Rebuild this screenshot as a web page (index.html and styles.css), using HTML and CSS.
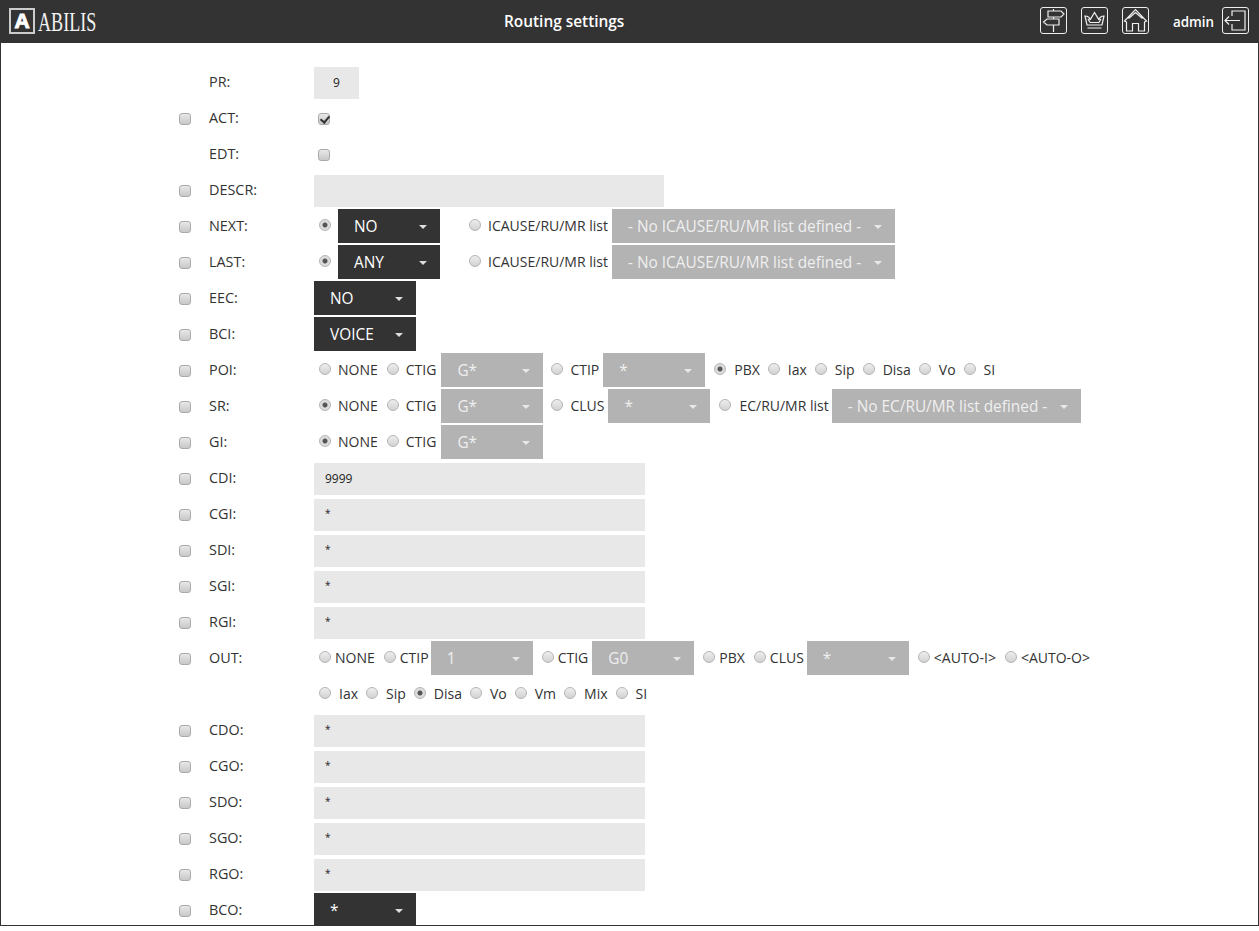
FILE: index.html
```html
<!DOCTYPE html>
<html lang="en">
<head>
<meta charset="utf-8">
<title>Routing settings</title>
<link rel="stylesheet" href="styles.css">
</head>
<body>
<div class="app">
  <header class="top">
    <div class="brand">
      <span class="logo-box">A</span>
      <span class="logo-word"><span>ABILIS</span></span>
    </div>
    <div class="title">Routing settings</div>
    <nav class="nav">
      <span class="ico"><svg viewBox="0 0 27 27"><path d="M13.5 2V4M13.5 10V12M13.5 18V25M8 4H21L24 7L21 10H8ZM7 12H19V18H7L3.5 15Z"/></svg></span>
      <span class="ico"><svg viewBox="0 0 27 27"><path d="M4 9C7 9 9 11 9 13C10 11 11.500 9 13.500 5.500C15.500 9 17 11 18 13C18 11 20 9 23 9L21 18H6ZM9 15.500H18M6.500 21H20.500M7 12L9 15.500M20 12L18 15.500"/></svg></span>
      <span class="ico"><svg viewBox="0 0 27 27"><path d="M2.500 14L13.500 2.500L24.500 14L22.500 15V24H16.500V16.500H10.500V24H4.500V15ZM6.500 11.500L13.500 5.500L20.500 11.500"/></svg></span>
      <span class="user">admin</span>
      <span class="ico"><svg viewBox="0 0 27 27"><path d="M10 9V4H23V23H10V17M3 13.500H18M7 9.500L3 13.500L7 17.500"/></svg></span>
    </nav>
  </header>
  <main class="form">
    <div class="row"><span class="tick"></span><label class="lbl">PR:</label><div class="field"><input class="txt w-pr" value="9"></div></div>
    <div class="row"><span class="tick"><input type="checkbox" class="cb"></span><label class="lbl">ACT:</label><div class="field"><input type="checkbox" class="cb" checked></div></div>
    <div class="row"><span class="tick"></span><label class="lbl">EDT:</label><div class="field"><input type="checkbox" class="cb"></div></div>
    <div class="row"><span class="tick"><input type="checkbox" class="cb"></span><label class="lbl">DESCR:</label><div class="field"><input class="txt w-desc"></div></div>

    <div class="row"><span class="tick"><input type="checkbox" class="cb"></span><label class="lbl">NEXT:</label><div class="field">
      <label class="opt solo"><input type="radio" name="next" class="rd" checked></label><div class="sel"><span>NO</span><i></i></div>
      <label class="opt far"><input type="radio" name="next" class="rd">ICAUSE/RU/MR list</label><div class="sel off w-list"><span>- No ICAUSE/RU/MR list defined -</span><i></i></div>
    </div></div>
    <div class="row"><span class="tick"><input type="checkbox" class="cb"></span><label class="lbl">LAST:</label><div class="field">
      <label class="opt solo"><input type="radio" name="last" class="rd" checked></label><div class="sel"><span>ANY</span><i></i></div>
      <label class="opt far"><input type="radio" name="last" class="rd">ICAUSE/RU/MR list</label><div class="sel off w-list"><span>- No ICAUSE/RU/MR list defined -</span><i></i></div>
    </div></div>
    <div class="row"><span class="tick"><input type="checkbox" class="cb"></span><label class="lbl">EEC:</label><div class="field"><div class="sel"><span>NO</span><i></i></div></div></div>
    <div class="row"><span class="tick"><input type="checkbox" class="cb"></span><label class="lbl">BCI:</label><div class="field"><div class="sel"><span>VOICE</span><i></i></div></div></div>

    <div class="row"><span class="tick"><input type="checkbox" class="cb"></span><label class="lbl">POI:</label><div class="field">
      <label class="opt"><input type="radio" name="poi" class="rd">NONE</label>
      <label class="opt"><input type="radio" name="poi" class="rd">CTIG</label><div class="sel off nudge"><span>G*</span><i></i></div>
      <label class="opt"><input type="radio" name="poi" class="rd">CTIP</label><div class="sel off"><span>*</span><i></i></div>
      <label class="opt wide post"><input type="radio" name="poi" class="rd" checked>PBX</label>
      <label class="opt wide"><input type="radio" name="poi" class="rd">Iax</label>
      <label class="opt wide"><input type="radio" name="poi" class="rd">Sip</label>
      <label class="opt wide"><input type="radio" name="poi" class="rd">Disa</label>
      <label class="opt wide"><input type="radio" name="poi" class="rd">Vo</label>
      <label class="opt wide"><input type="radio" name="poi" class="rd">SI</label>
    </div></div>
    <div class="row"><span class="tick"><input type="checkbox" class="cb"></span><label class="lbl">SR:</label><div class="field">
      <label class="opt"><input type="radio" name="sr" class="rd" checked>NONE</label>
      <label class="opt"><input type="radio" name="sr" class="rd">CTIG</label><div class="sel off nudge"><span>G*</span><i></i></div>
      <label class="opt"><input type="radio" name="sr" class="rd">CLUS</label><div class="sel off"><span>*</span><i></i></div>
      <label class="opt wide post"><input type="radio" name="sr" class="rd">EC/RU/MR list</label><div class="sel off w-ec"><span>- No EC/RU/MR list defined -</span><i></i></div>
    </div></div>
    <div class="row"><span class="tick"><input type="checkbox" class="cb"></span><label class="lbl">GI:</label><div class="field">
      <label class="opt"><input type="radio" name="gi" class="rd" checked>NONE</label>
      <label class="opt"><input type="radio" name="gi" class="rd">CTIG</label><div class="sel off nudge"><span>G*</span><i></i></div>
    </div></div>

    <div class="row"><span class="tick"><input type="checkbox" class="cb"></span><label class="lbl">CDI:</label><div class="field"><input class="txt" value="9999"></div></div>
    <div class="row"><span class="tick"><input type="checkbox" class="cb"></span><label class="lbl">CGI:</label><div class="field"><input class="txt star" value="*"></div></div>
    <div class="row"><span class="tick"><input type="checkbox" class="cb"></span><label class="lbl">SDI:</label><div class="field"><input class="txt star" value="*"></div></div>
    <div class="row"><span class="tick"><input type="checkbox" class="cb"></span><label class="lbl">SGI:</label><div class="field"><input class="txt star" value="*"></div></div>
    <div class="row"><span class="tick"><input type="checkbox" class="cb"></span><label class="lbl">RGI:</label><div class="field"><input class="txt star" value="*"></div></div>

    <div class="row"><span class="tick"><input type="checkbox" class="cb"></span><label class="lbl">OUT:</label><div class="field narrow">
      <label class="opt"><input type="radio" name="out" class="rd">NONE</label>
      <label class="opt"><input type="radio" name="out" class="rd">CTIP</label><div class="sel off"><span>1</span><i></i></div>
      <label class="opt"><input type="radio" name="out" class="rd">CTIG</label><div class="sel off ctig"><span>G0</span><i></i></div>
      <label class="opt"><input type="radio" name="out" class="rd">PBX</label>
      <label class="opt"><input type="radio" name="out" class="rd">CLUS</label><div class="sel off clus"><span>*</span><i></i></div>
      <label class="opt"><input type="radio" name="out" class="rd">&lt;AUTO-I&gt;</label>
      <label class="opt"><input type="radio" name="out" class="rd">&lt;AUTO-O&gt;</label>
    </div></div>
    <div class="row"><span class="tick"></span><span class="lbl"></span><div class="field">
      <label class="opt wide"><input type="radio" name="out" class="rd">Iax</label>
      <label class="opt wide"><input type="radio" name="out" class="rd">Sip</label>
      <label class="opt wide"><input type="radio" name="out" class="rd" checked>Disa</label>
      <label class="opt wide"><input type="radio" name="out" class="rd">Vo</label>
      <label class="opt wide"><input type="radio" name="out" class="rd">Vm</label>
      <label class="opt wide"><input type="radio" name="out" class="rd">Mix</label>
      <label class="opt wide"><input type="radio" name="out" class="rd">SI</label>
    </div></div>

    <div class="row"><span class="tick"><input type="checkbox" class="cb"></span><label class="lbl">CDO:</label><div class="field"><input class="txt star" value="*"></div></div>
    <div class="row"><span class="tick"><input type="checkbox" class="cb"></span><label class="lbl">CGO:</label><div class="field"><input class="txt star" value="*"></div></div>
    <div class="row"><span class="tick"><input type="checkbox" class="cb"></span><label class="lbl">SDO:</label><div class="field"><input class="txt star" value="*"></div></div>
    <div class="row"><span class="tick"><input type="checkbox" class="cb"></span><label class="lbl">SGO:</label><div class="field"><input class="txt star" value="*"></div></div>
    <div class="row"><span class="tick"><input type="checkbox" class="cb"></span><label class="lbl">RGO:</label><div class="field"><input class="txt star" value="*"></div></div>
    <div class="row"><span class="tick"><input type="checkbox" class="cb"></span><label class="lbl">BCO:</label><div class="field"><div class="sel"><span>*</span><i></i></div></div></div>
  </main>
</div>
</body>
</html>
```
FILE: styles.css
```css
* { box-sizing: border-box; }
html, body { margin: 0; padding: 0; background: #fff; overflow: hidden; }
body { font-family: "Open Sans", sans-serif; font-size: 14px; color: #333; }

.app {
  width: 1259px;
  height: 926px;
  display: flex;
  flex-direction: column;
  border: 1px solid #333;
  border-top: 0;
  overflow: hidden;
}

.top {
  flex: none;
  height: 43px;
  margin: 0 -1px;
  background: #333;
  color: #fff;
  display: flex;
  align-items: center;
}
.brand { width: 504px; display: flex; align-items: center; padding-left: 9px; }
.logo-box {
  width: 26px;
  height: 26px;
  margin-top: -1px;
  border: 2px solid #ccc;
  background: #333;
  color: #fff;
  font: 900 21px/22px "Liberation Sans", sans-serif;
  -webkit-text-stroke: 1px #fff;
  text-align: center;
}
.logo-word { width: 62px; margin-left: 3px; overflow: visible; }
.logo-word span {
  display: inline-block;
  font: 27px/30px "Liberation Serif", serif;
  transform: scaleX(.67);
  transform-origin: left center;
  color: #f2f2f2;
}
.title { font-size: 15.4px; font-weight: 600; line-height: 22px; }
.nav { margin-left: auto; display: flex; align-items: center; padding-right: 10px; margin-bottom: 2px; }
.ico {
  width: 27px;
  height: 27px;
  margin-left: 14px;
  border: 1px solid #eee;
  border-radius: 3px;
  display: block;
  position: relative;
}
.ico svg {
  width: 27px;
  height: 27px;
  margin: -1px;
  display: block;
  fill: none;
  stroke: #f0f0f0;
  stroke-width: 1.2;
}
.user { margin: 2px -6px 0 24px; font-size: 13.4px; font-weight: 600; }

.form { flex: none; padding: 21px 0 0 178px; }
.row { display: flex; align-items: center; height: 36px; }
.tick { flex: none; width: 30px; display: flex; }
.lbl { flex: none; width: 105px; font-size: 14.4px; margin-bottom: 2px; }
.field { display: flex; align-items: center; height: 36px; white-space: nowrap; }

.cb {
  appearance: none;
  width: 12px;
  height: 12px;
  margin: 2px 0 0;
  border: 1px solid #aaa;
  border-radius: 3px;
  background: linear-gradient(#e8e8e8, #c8c8c8);
  position: relative;
}
.field > .cb { margin-left: 4px; }
.cb:checked::after {
  content: "";
  position: absolute;
  left: 3px;
  top: 0;
  width: 4px;
  height: 7px;
  border: solid #333;
  border-width: 0 2px 2px 0;
  transform: rotate(40deg);
}

.rd {
  appearance: none;
  flex: none;
  width: 12px;
  height: 12px;
  margin: 0 7px 0 0;
  border: 1px solid #b5b5b5;
  border-radius: 50%;
  background: linear-gradient(#eee, #d2d2d2);
}
.rd:checked { background: radial-gradient(circle, #555 0 2px, #dcdcdc 3px); }
.opt { display: flex; align-items: center; padding: 0 4px 0 5px; margin-bottom: 2px; }
.solo { padding-right: 0; }
.sel + .opt { margin-left: 3px; }
.sel + .far { margin-left: 24px; }
.sel + .post { margin-left: 4px; }
.nudge { margin-left: 1px; }
.wide { padding-right: 3px; }
.wide .rd { margin-right: 8px; }

.narrow .rd { margin-right: 4px; }
.narrow .sel { margin-left: -2px; }
.narrow .ctig { margin-left: 0; }
.narrow .clus { margin-left: -1px; }
.narrow .sel + .opt { margin-left: 4px; }

.sel {
  flex: none;
  width: 102px;
  height: 34px;
  padding: 0 13px 0 16px;
  background: #333;
  color: #fff;
  font-size: 15.4px;
  display: flex;
  align-items: center;
  justify-content: space-between;
}
.sel i {
  width: 0;
  height: 0;
  margin-top: 2px;
  border: 4px solid transparent;
  border-top-color: #ddd;
  border-bottom-width: 0;
}
.off { background: #b3b3b3; color: #efefef; }
.off i { border-top-color: #e8e8e8; }
.w-list { width: 283px; }
.w-ec { width: 249px; }

.txt {
  width: 331px;
  height: 32px;
  margin-top: 2px;
  border: 0;
  padding: 0 11px 2px;
  background: #e8e8e8;
  font: 12px "Open Sans", sans-serif;
  color: #222;
}
.star { font-size: 10px; padding: 0 11px 4px; }
.w-pr { width: 45px; text-align: center; padding: 0 0 2px; }
.w-desc { width: 350px; }
```
